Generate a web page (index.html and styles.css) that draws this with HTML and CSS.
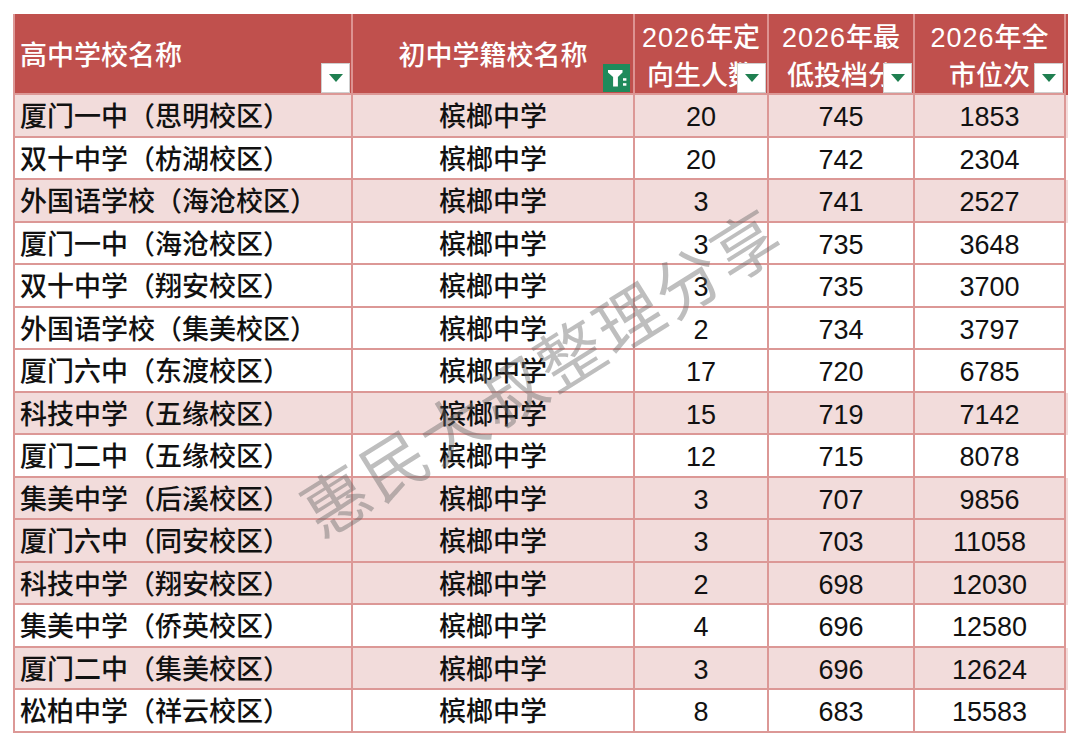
FILE: index.html
```html
<!DOCTYPE html>
<html lang="zh">
<head>
<meta charset="utf-8">
<title>2026 定向生</title>
<link rel="stylesheet" href="styles.css">
</head>
<body>
<div class="sheet">
  <div class="row head">
    <div class="cell left"><span>高中学校名称</span>
      <span class="dd"><svg width="14" height="8" viewBox="0 0 14 8"><polygon points="0,0 14,0 7,8" fill="#1f7f50"/></svg></span>
    </div>
    <div class="cell"><span>初中学籍校名称</span>
      <span class="filter"><svg width="27" height="28" viewBox="0 0 27 28"><path d="M5 6 H19.5 V8.6 L14.9 13 V22.5 H10.1 V13 L5 8.6 Z" fill="#fff"/><rect x="20" y="14.2" width="3.4" height="2.5" fill="#fff"/><rect x="20" y="19.2" width="3.4" height="2.5" fill="#fff"/></svg></span>
    </div>
    <div class="cell two"><span class="lines"><span class="num">2026</span>年定<br>向生人数</span>
      <span class="dd"><svg width="14" height="8" viewBox="0 0 14 8"><polygon points="0,0 14,0 7,8" fill="#1f7f50"/></svg></span>
    </div>
    <div class="cell two"><span class="lines"><span class="num">2026</span>年最<br>低投档分</span>
      <span class="dd"><svg width="14" height="8" viewBox="0 0 14 8"><polygon points="0,0 14,0 7,8" fill="#1f7f50"/></svg></span>
    </div>
    <div class="cell two"><span class="lines"><span class="num">2026</span>年全<br>市位次</span>
      <span class="dd"><svg width="14" height="8" viewBox="0 0 14 8"><polygon points="0,0 14,0 7,8" fill="#1f7f50"/></svg></span>
    </div>
  </div>

  <div class="row pink"><div class="cell left">厦门一中（思明校区）</div><div class="cell">槟榔中学</div><div class="cell">20</div><div class="cell">745</div><div class="cell">1853</div></div>
  <div class="row"><div class="cell left">双十中学（枋湖校区）</div><div class="cell">槟榔中学</div><div class="cell">20</div><div class="cell">742</div><div class="cell">2304</div></div>
  <div class="row pink"><div class="cell left">外国语学校（海沧校区）</div><div class="cell">槟榔中学</div><div class="cell">3</div><div class="cell">741</div><div class="cell">2527</div></div>
  <div class="row"><div class="cell left">厦门一中（海沧校区）</div><div class="cell">槟榔中学</div><div class="cell">3</div><div class="cell">735</div><div class="cell">3648</div></div>
  <div class="row"><div class="cell left">双十中学（翔安校区）</div><div class="cell">槟榔中学</div><div class="cell">3</div><div class="cell">735</div><div class="cell">3700</div></div>
  <div class="row"><div class="cell left">外国语学校（集美校区）</div><div class="cell">槟榔中学</div><div class="cell">2</div><div class="cell">734</div><div class="cell">3797</div></div>
  <div class="row"><div class="cell left">厦门六中（东渡校区）</div><div class="cell">槟榔中学</div><div class="cell">17</div><div class="cell">720</div><div class="cell">6785</div></div>
  <div class="row pink"><div class="cell left">科技中学（五缘校区）</div><div class="cell">槟榔中学</div><div class="cell">15</div><div class="cell">719</div><div class="cell">7142</div></div>
  <div class="row"><div class="cell left">厦门二中（五缘校区）</div><div class="cell">槟榔中学</div><div class="cell">12</div><div class="cell">715</div><div class="cell">8078</div></div>
  <div class="row pink"><div class="cell left">集美中学（后溪校区）</div><div class="cell">槟榔中学</div><div class="cell">3</div><div class="cell">707</div><div class="cell">9856</div></div>
  <div class="row pink"><div class="cell left">厦门六中（同安校区）</div><div class="cell">槟榔中学</div><div class="cell">3</div><div class="cell">703</div><div class="cell">11058</div></div>
  <div class="row pink"><div class="cell left">科技中学（翔安校区）</div><div class="cell">槟榔中学</div><div class="cell">2</div><div class="cell">698</div><div class="cell">12030</div></div>
  <div class="row"><div class="cell left">集美中学（侨英校区）</div><div class="cell">槟榔中学</div><div class="cell">4</div><div class="cell">696</div><div class="cell">12580</div></div>
  <div class="row pink"><div class="cell left">厦门二中（集美校区）</div><div class="cell">槟榔中学</div><div class="cell">3</div><div class="cell">696</div><div class="cell">12624</div></div>
  <div class="row"><div class="cell left">松柏中学（祥云校区）</div><div class="cell">槟榔中学</div><div class="cell">8</div><div class="cell">683</div><div class="cell">15583</div></div>

  <div class="watermark">惠民大叔整理分享</div>
</div>
</body>
</html>
```

FILE: styles.css
```css
html, body {
  margin: 0;
  padding: 0;
  background: #ffffff;
}

.sheet {
  position: relative;
  margin: 14px 0 0 13px;
  width: 1053px;
  border-left: 2px solid #dc9896;
  font-family: "Liberation Sans", "Noto Sans CJK SC", sans-serif;
}

.row {
  display: grid;
  grid-template-columns: 338px 282px 134px 146px 151px;
  height: 42.5px;
  background: #ffffff;
}

.row.pink {
  background: #f2dcdb;
}

.cell {
  position: relative;
  box-sizing: border-box;
  display: flex;
  align-items: center;
  justify-content: center;
  padding-top: 5px;
  border-right: 2px solid #dc9896;
  border-bottom: 2px solid #dc9896;
  font-size: 27px;
  font-weight: 500;
  line-height: 1;
  color: #111111;
  white-space: nowrap;
  overflow: hidden;
}

.cell.left {
  justify-content: flex-start;
  padding-left: 5px;
}

.row.head {
  height: 81px;
  background: #c0504d;
}

.head .cell {
  color: #ffffff;
  font-size: 27px;
  padding-top: 5px;
  border-right-color: #dd9391;
}

.head .cell.two {
  padding-top: 7px;
}

.lines {
  display: block;
  text-align: center;
  line-height: 38.5px;
}

.num {
  letter-spacing: 1px;
}

.dd {
  position: absolute;
  right: 1px;
  bottom: 0;
  width: 29px;
  height: 30px;
  box-sizing: border-box;
  background: #ffffff;
  border: 1px solid #cfcfcf;
  display: flex;
  align-items: center;
  justify-content: center;
}

.dd svg {
  display: block;
}

.filter {
  position: absolute;
  right: 3px;
  bottom: 1px;
  width: 27px;
  height: 28px;
  background: #1f8a5b;
  display: block;
}

.filter svg {
  display: block;
}

.watermark {
  position: absolute;
  left: 247px;
  top: 322px;
  width: 556px;
  text-align: center;
  font-family: "Noto Sans CJK SC", sans-serif;
  font-weight: 400;
  font-size: 66px;
  letter-spacing: 3px;
  line-height: 1;
  color: rgba(100, 100, 100, 0.42);
  white-space: nowrap;
  transform: rotate(-32deg);
  transform-origin: 50% 50%;
  pointer-events: none;
}
```
